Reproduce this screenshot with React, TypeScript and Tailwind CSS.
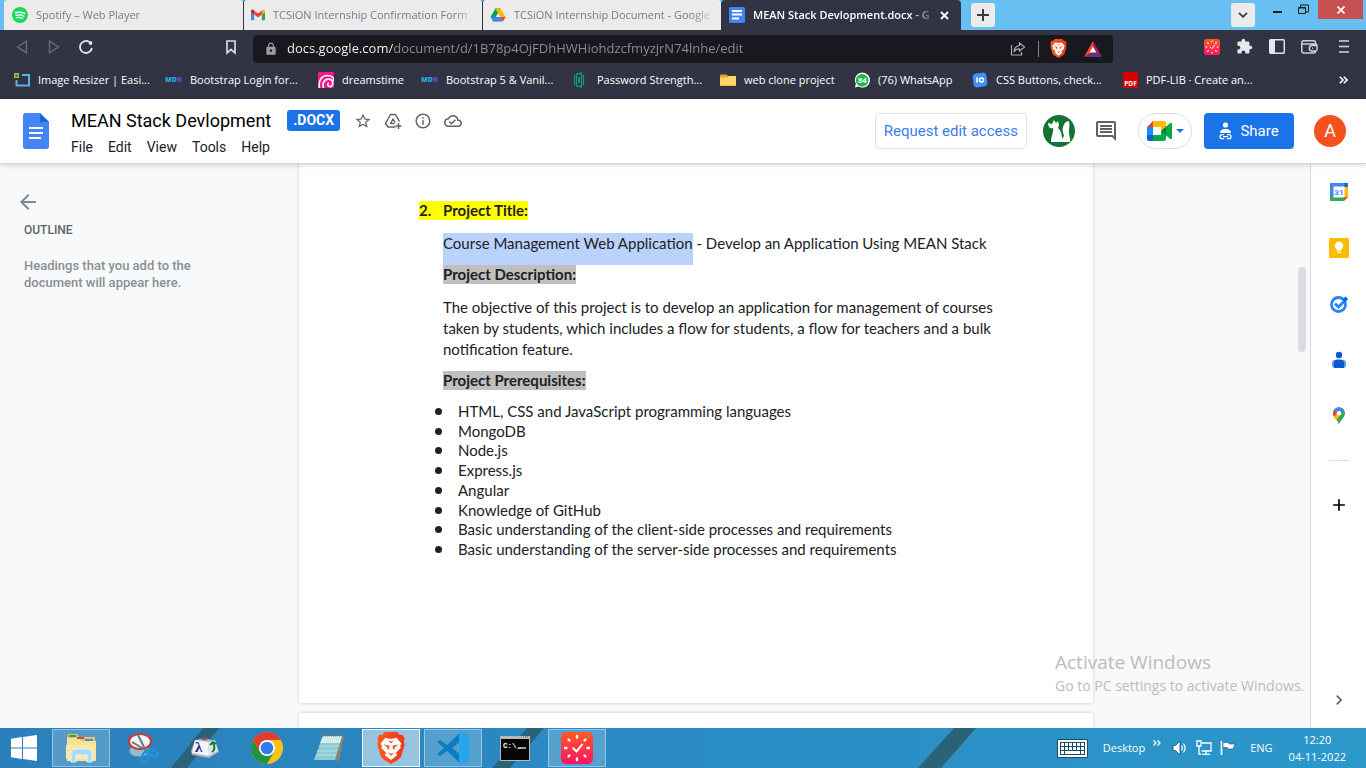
import type { ReactNode } from "react";
import {
  MdAdd,
  MdArrowBack,
  MdChevronRight,
  MdExtension,
  MdInfoOutline,
  MdLock,
  MdOutlineCloudDone,
  MdOutlineComment,
  MdStarBorder,
} from "react-icons/md";

const SpotifyIcon = () => (
  <svg width="16" height="16" viewBox="0 0 16 16" className="shrink-0">
    <circle cx="8" cy="8" r="8" fill="#1ed760" />
    <g fill="none" stroke="#fff" strokeLinecap="round">
      <path d="M3.5 5.8c3-.9 6.600-.6 9.200.8" strokeWidth="1.500" />
      <path d="M4 8.300c2.600-.7 5.500-.4 7.800.9" strokeWidth="1.300" />
      <path d="M4.300 10.700c2.200-.5 4.500-.3 6.400.8" strokeWidth="1.100" />
    </g>
  </svg>
);

const GmailIcon = () => (
  <svg width="14" height="16" viewBox="0 0 14 16" className="shrink-0">
    <path d="M0 4v8.200c0 .6.400 1 1 1h2.200V7.500z" fill="#4285f4" />
    <path d="M14 4v8.200c0 .6-.4 1-1 1h-2.200V7.500z" fill="#34a853" />
    <path d="M10.800 3.600v4L14 5.200V4c0-1.400-1.500-2-2.500-1.100z" fill="#fbbc04" />
    <path d="M0 4v1.200l3.200 2.400v-4l-.7-.7C1.500 2 0 2.600 0 4z" fill="#c5221f" />
    <path d="M3.200 3.600v4L7 10.400l3.800-2.800v-4L7 6.400z" fill="#ea4335" />
  </svg>
);

const DriveIcon = () => (
  <svg width="16" height="16" viewBox="0 0 16 16" className="shrink-0">
    <path d="M5.400 1.500h5.200L8 6z" fill="#188038" />
    <path d="M10.600 1.500L15.500 10h-5.200L5.400 1.500z" fill="#fbbc04" />
    <path d="M5.400 1.500L8 6 5.700 10H.5z" fill="#0f9d58" />
    <path d="M.5 10h10l-2.400 4.500H3.100z" fill="#4285f4" />
    <path d="M3.100 14.500L5.700 10h4.600l2.600 4.500z" fill="#4285f4" />
    <path d="M10.300 10h5.200l-2.600 4.500z" fill="#ea4335" />
  </svg>
);

const DocsTabIcon = () => (
  <svg width="16" height="16" viewBox="0 0 16 16" className="shrink-0">
    <rect width="16" height="16" rx="1.500" fill="#4285f4" />
    <path d="M3 4h10M3 7.500h10M3 11.500h7" stroke="#fff" strokeWidth="1.800" />
  </svg>
);

const ResizerIcon = () => (
  <svg width="16" height="16" viewBox="0 0 16 16">
    <path d="M8 3h7v10.500H2.500V8" fill="none" stroke="#5aaeea" strokeWidth="2" />
    <rect x="0" y="1" width="5" height="5" fill="#8bc34a" />
    <rect x="1.500" y="2.500" width="2" height="2" fill="#33691e" />
  </svg>
);

const MdbIcon = () => (
  <svg width="17" height="16" viewBox="0 0 17 16">
    <text x="0" y="10" fontFamily="Open Sans" fontWeight="800" fontSize="7" fill="#29a9e1">
      MD<tspan fill="#5b4fc4">B</tspan>
    </text>
  </svg>
);

const DreamIcon = () => (
  <svg width="16" height="16" viewBox="0 0 16 16">
    <rect width="16" height="16" rx="1" fill="#f2188c" />
    <path
      d="M1.500 16C0 8 4 3.500 9.500 3.500c4 0 6.500 2.500 6.500 5.500M5.500 16c-1.500-5 .8-8.800 5-8.800 3 0 4.300 2 4.300 4.300 0 2.300-1.800 3.500-3.600 3s-2-3-.3-3.500"
      fill="none"
      stroke="#fff"
      strokeWidth="1.700"
    />
  </svg>
);

const PasswordIcon = () => (
  <svg width="16" height="16" viewBox="0 0 16 16" fill="none" stroke="#0f9d6b">
    <path d="M1.500 3v10M3.500 2l5-1v14l-5-1zM10.500 3v10" strokeWidth="1.300" />
    <path d="M6 5v6" strokeWidth="1.800" />
  </svg>
);

const FolderIcon = () => (
  <svg width="16" height="16" viewBox="0 0 16 16">
    <path d="M1 2.500h5.500L8 4h7c.6 0 1 .4 1 1v8c0 .6-.4 1-1 1H1c-.6 0-1-.4-1-1V3.500c0-.6.4-1 1-1z" fill="#e2a52c" />
    <path d="M1 5.500h6L8.500 4H15c.6 0 1 .4 1 1v7.500c0 .6-.4 1-1 1H1c-.6 0-1-.4-1-1v-6c0-.6.4-1 1-1z" fill="#ffd766" />
  </svg>
);

const WhatsAppIcon = () => (
  <svg width="16" height="17" viewBox="0 0 17 17">
    <path d="M1 16l1-4A8 8 0 1 1 5 15z" fill="#fff" />
    <circle cx="8.700" cy="8.200" r="6.700" fill="#1fb84f" />
    <text x="8.700" y="11" textAnchor="middle" fontFamily="Open Sans" fontWeight="700" fontSize="8" fill="#fff">
      84
    </text>
  </svg>
);

const CssButtonsIcon = () => (
  <svg width="16" height="16" viewBox="0 0 16 16">
    <rect x="1" y="1" width="14" height="14" rx="4" fill="#3f8ff5" transform="rotate(-8 8 8)" />
    <path d="M5 5.500v5" stroke="#fff" strokeWidth="1.600" />
    <circle cx="9.500" cy="8" r="2" fill="none" stroke="#fff" strokeWidth="1.500" />
  </svg>
);

const PdfIcon = () => (
  <svg width="15" height="16" viewBox="0 0 15 16">
    <rect width="15" height="16" fill="#d50000" />
    <text x="7.500" y="13.500" textAnchor="middle" fontFamily="Open Sans" fontWeight="700" fontSize="6.500" fill="#fff">
      PDF
    </text>
  </svg>
);

const BraveIcon = ({ size }: { size: number }) => (
  <svg width={size} height={size} viewBox="0 0 24 24">
    <defs>
      <linearGradient id="braveFill" x1="0" y1="0" x2="1" y2="0">
        <stop offset="0" stopColor="#ff5a1f" />
        <stop offset="1" stopColor="#f5351a" />
      </linearGradient>
    </defs>
    <path d="M7.500 0h9l2.200 2.300 2-.2L22.300 5l-.7 2 .6 2.500-2.700 9.300-2.700 2.400L12 24l-4.800-2.800-2.700-2.400L1.800 9.500 2.400 7l-.7-2 1.600-2.900 2 .2z" fill="url(#braveFill)" />
    <path d="M7.800 4.300l4.200.9 4.200-.9 3.700 4.500-1.100 1.500.5 1.700-3.600 3.500.9 2L12 21l-4.600-3.500.9-2L4.700 12l.5-1.700-1.100-1.500z" fill="#fff" />
    <path d="M6.200 9.300l3.900.6.8 1.200-.7 2.300-1-.6.2-1.400zM17.800 9.300l-3.900.6-.8 1.200.7 2.300 1-.6-.2-1.400zM9.800 6.200l2.200 1 2.200-1L12 8.600zM9.700 15.300l2.300 1 2.300-1-2.300 2.600z" fill="#fb4a20" />
  </svg>
);

const WatchIcon = ({ size }: { size: number }) => (
  <svg width={size} height={size} viewBox="0 0 32 32">
    <defs>
      <linearGradient id="watchFill" x1="0" y1="0" x2="0" y2="1">
        <stop offset="0" stopColor="#ff5a26" />
        <stop offset="1" stopColor="#ff1463" />
      </linearGradient>
    </defs>
    <rect width="32" height="32" rx="5" fill="url(#watchFill)" />
    <g stroke="#fff" strokeWidth="2.400" strokeLinecap="round">
      <path d="M16 4v1.500M16 26.500V28M4 16h1.500M26.500 16H28M7.500 7.500l1 1M23.500 23.500l1 1M7.500 24.500l1-1M23.500 8.500l1-1" />
    </g>
    <path d="M11.500 15.500l4 4 6-7.500" fill="none" stroke="#fff" strokeWidth="2" />
  </svg>
);

const AddToDriveIcon = () => (
  <svg width="18" height="18" viewBox="0 0 18 18" fill="none" stroke="#5f6368" strokeWidth="1.500" strokeLinejoin="round">
    <path d="M11.500 15H4L1.500 11.500 6.500 2.500h5l4 7" />
    <path d="M10.500 11.500h-4l2.500-4.500 2 3.500" />
    <path d="M14.500 11v6M11.500 14h6" />
  </svg>
);

const bookmarks: { label: string; icon: ReactNode; width: string }[] = [
  { label: "Image Resizer | Easi...", icon: <ResizerIcon />, width: "w-[151px]" },
  { label: "Bootstrap Login for...", icon: <MdbIcon />, width: "w-[153px]" },
  { label: "dreamstime", icon: <DreamIcon />, width: "w-[103px]" },
  { label: "Bootstrap 5 & Vanil...", icon: <MdbIcon />, width: "w-[152px]" },
  { label: "Password Strength...", icon: <PasswordIcon />, width: "w-[147px]" },
  { label: "web clone project", icon: <FolderIcon />, width: "w-[134px]" },
  { label: "(76) WhatsApp", icon: <WhatsAppIcon />, width: "w-[118px]" },
  { label: "CSS Buttons, check...", icon: <CssButtonsIcon />, width: "w-[151px]" },
  { label: "PDF-LIB · Create an...", icon: <PdfIcon />, width: "w-[150px]" },
];

const backgroundTabs = [
  { label: "Spotify – Web Player", icon: <SpotifyIcon /> },
  { label: "TCSiON Internship Confirmation Form", icon: <GmailIcon /> },
  { label: "TCSiON Internship Document - Google", icon: <DriveIcon /> },
];

function TabStrip() {
  return (
    <div className="flex h-[30px] shrink-0 bg-[#68bff1] pl-1 text-[11px]">
      {backgroundTabs.map((tab) => (
        <button
          key={tab.label}
          className="flex h-[30px] w-[239px] items-center gap-2 rounded-t-[3px] border-l border-[#323443] bg-[#ebebeb] pr-1 pl-[7px] text-[#7b7c80] first:border-[#ebebeb]"
        >
          {tab.icon}
          <span className="min-w-0 flex-1 overflow-hidden text-left whitespace-nowrap [mask-image:linear-gradient(90deg,#000_88%,transparent)]">
            {tab.label}
          </span>
        </button>
      ))}
      <div className="flex w-[240px] items-center gap-2 rounded-t-[4px] bg-[#323443] pr-2 pl-2 text-white">
        <DocsTabIcon />
        <button className="min-w-0 flex-1 overflow-hidden text-left font-semibold whitespace-nowrap [mask-image:linear-gradient(90deg,#000_86%,transparent)]">
          MEAN Stack Devlopment.docx - G
        </button>
        <button aria-label="Close tab" className="-ml-1 py-1 pr-1">
          <svg width="9" height="9" viewBox="0 0 9 9" stroke="#fff" strokeWidth="1.800">
            <path d="M1 1l7 7M8 1L1 8" />
          </svg>
        </button>
      </div>
      <button aria-label="New tab" className="mt-[3px] ml-[10px] flex size-6 items-center justify-center rounded-[3px] bg-[#ebebeb]">
        <svg width="12" height="12" viewBox="0 0 12 12" stroke="#3c3c40" strokeWidth="2">
          <path d="M6 0v12M0 6h12" />
        </svg>
      </button>
      <div className="flex-1" />
      <button aria-label="Search tabs" className="mt-[3px] flex size-6 items-center justify-center rounded-[3px] bg-[#ebebeb]">
        <svg width="10" height="6" viewBox="0 0 10 6" fill="none" stroke="#3c3c40" strokeWidth="1.800">
          <path d="M1 .8l4 4 4-4" />
        </svg>
      </button>
      <button aria-label="Minimize" className="ml-[18px] h-6">
        <svg width="9" height="12" viewBox="0 0 9 12">
          <path d="M0 6h9" stroke="#1c1c1c" strokeWidth="2" />
        </svg>
      </button>
      <button aria-label="Restore" className="ml-4 h-[18px]">
        <svg width="11" height="11" viewBox="0 0 11 11" fill="none" stroke="#1c1c1c">
          <path d="M.5 3.500h7v6h-7zM.5 4h7M2.500 3V1h8v7H8" />
        </svg>
      </button>
      <button aria-label="Close window" className="mr-[3px] ml-[9px] flex h-[19px] w-[45px] items-center justify-center bg-[#c75050]">
        <svg width="8" height="8" viewBox="0 0 8 8" stroke="#fff" strokeWidth="1.700">
          <path d="M.5.500l7 7M7.500.500l-7 7" />
        </svg>
      </button>
    </div>
  );
}

function AddressBar() {
  return (
    <div className="flex h-[37px] shrink-0 items-center bg-[#323443] pr-[17px] pb-1 pl-4">
      <button aria-label="Back" className="mr-5">
        <svg width="12" height="14" viewBox="0 0 12 14" fill="none" stroke="#6d6f7c" strokeWidth="1.300">
          <path d="M10.500 1.200v11.600L1.500 7z" />
        </svg>
      </button>
      <button aria-label="Forward" className="mr-[18px]">
        <svg width="12" height="14" viewBox="0 0 12 14" fill="none" stroke="#6d6f7c" strokeWidth="1.300">
          <path d="M1.500 1.200v11.600l9-5.800z" />
        </svg>
      </button>
      <button aria-label="Reload">
        <svg width="16" height="16" viewBox="0 0 16 16" fill="none" stroke="#e8e8ec" strokeWidth="1.800">
          <path d="M11 2.800A6 6 0 1 0 13.900 9" />
          <circle cx="12.500" cy="4" r="1.900" fill="#e8e8ec" stroke="none" />
        </svg>
      </button>
      <button aria-label="Bookmark this page" className="mr-[14px] ml-[129px]">
        <svg width="16" height="16" viewBox="0 0 16 16" fill="none" stroke="#d8d8dc" strokeWidth="1.700">
          <path d="M4 2h8v12l-4-3.500L4 14z" />
        </svg>
      </button>
      <div className="mt-1 flex h-7 min-w-0 flex-1 items-center rounded bg-[#17191e] px-[11px]">
        <MdLock size={14} color="#9b9ca3" />
        <input
          aria-label="Address"
          readOnly
          value="docs.google.com/document/d/1B78p4OjFDhHWHiohdzcfmyzjrN74lnhe/edit"
          className="ml-[9px] min-w-0 flex-1 bg-[linear-gradient(90deg,#fff_106px,#8d8f96_106px)] bg-clip-text text-[13px] text-transparent outline-none"
        />
        <button aria-label="Share page" className="mr-3">
          <svg width="16" height="14" viewBox="0 0 16 14" fill="none" stroke="#a9aab0" strokeWidth="1.200">
            <path d="M1.500 3v10h10v-3M9.500 1l5 4-5 4V6.800C7 6.800 5.200 7.800 4 10c.2-3.700 2.200-6 5.500-6.500z" />
          </svg>
        </button>
        <span className="mr-[10px] h-4 w-px bg-[#85868c]" />
        <button aria-label="Brave shields" className="mr-4">
          <BraveIcon size={19} />
        </button>
        <button aria-label="Brave rewards">
          <svg width="18" height="16" viewBox="0 0 18 16">
            <path d="M9 0L0 16l9-5z" fill="#ff4724" />
            <path d="M9 0l9 16-9-5z" fill="#9e1f63" />
            <path d="M0 16h18l-9-5z" fill="#662d91" />
            <path d="M9 5.500l3.300 6H5.700z" fill="#fff" />
          </svg>
        </button>
      </div>
      <div className="ml-[91px] flex items-center gap-4 text-[#e8e8ec]">
        <button aria-label="Timer extension">
          <WatchIcon size={16} />
        </button>
        <button aria-label="Extensions">
          <MdExtension size={17} />
        </button>
        <button aria-label="Sidebar">
          <svg width="16" height="15" viewBox="0 0 16 15">
            <rect x=".7" y=".7" width="14.600" height="13.600" rx="1" fill="none" stroke="#e8e8ec" strokeWidth="1.400" />
            <path d="M1 1h5v13H1z" fill="#e8e8ec" />
          </svg>
        </button>
        <button aria-label="Wallet">
          <svg width="17" height="14" viewBox="0 0 17 14" fill="none" stroke="#d0d0d5" strokeWidth="1.500">
            <path d="M14.500 4V2.500c0-1-.7-1.700-1.700-1.700H2.500c-1 0-1.700.7-1.700 1.700v8.500c0 1.200.8 2 2 2h9.700c1.200 0 2-.8 2-2M1 4h13.500c1 0 1.500.5 1.500 1.500v3.800c0 1-.5 1.700-1.500 1.700H11a2.700 2.700 0 0 1 0-5.400h5M11 8.300h1" />
          </svg>
        </button>
        <button aria-label="Menu" className="ml-[5px]">
          <svg width="10" height="13" viewBox="0 0 10 13" stroke="#d8d8dc" strokeWidth="1.600">
            <path d="M0 1h10M0 6.500h10M0 12h10" />
          </svg>
        </button>
      </div>
    </div>
  );
}

function Bookmarks() {
  return (
    <nav aria-label="Bookmarks" className="flex h-8 shrink-0 items-center bg-[#323443] pr-[18px] pb-[6px] pl-[14px] text-[11px] text-white">
      {bookmarks.map((b) => (
        <a key={b.label} href="#" className={`flex shrink-0 items-center gap-2 whitespace-nowrap ${b.width}`}>
          {b.icon}
          {b.label}
        </a>
      ))}
      <button aria-label="More bookmarks" className="ml-auto">
        <svg width="9" height="8" viewBox="0 0 9 8" fill="none" stroke="#fff" strokeWidth="1.600">
          <path d="M.8.800L4 4 .8 7.200M4.800.800L8 4 4.800 7.200" />
        </svg>
      </button>
    </nav>
  );
}

function DocsHeader() {
  return (
    <header className="z-10 flex h-[65px] shrink-0 items-center border-b border-[#d5d8db] bg-white pr-5 pl-[23px] font-[Roboto,sans-serif] shadow-[0_1px_5px_rgba(0,0,0,0.18)]">
      <a href="#" aria-label="Docs home">
        <svg width="26" height="36" viewBox="0 0 26 36">
          <path d="M2.500 0H17l9 9v24.500c0 1.500-1 2.500-2.500 2.500h-21C1 36 0 35 0 33.500v-31C0 1 1 0 2.500 0z" fill="#4285f4" />
          <path d="M17 0l9 9h-9z" fill="#1967d2" />
          <path d="M6 15h14M6 20h14M6 25h12" stroke="#fff" strokeWidth="2" />
        </svg>
      </a>
      <div className="ml-[22px] flex flex-col pt-[3px]">
        <div className="flex h-7 items-center">
          <h1 className="text-lg text-black">MEAN Stack Devlopment</h1>
          <span className="ml-4 rounded-[3px] bg-[#1a73e8] px-[6px] text-sm leading-[21px] font-bold text-white">.DOCX</span>
          <div className="ml-[14px] flex items-center gap-3 text-[#5f6368]">
            <button aria-label="Star"><MdStarBorder size={18} /></button>
            <button aria-label="Add shortcut to Drive"><AddToDriveIcon /></button>
            <button aria-label="Document status"><MdInfoOutline size={18} /></button>
            <button aria-label="Saved to Drive"><MdOutlineCloudDone size={18} /></button>
          </div>
        </div>
        <nav className="flex gap-[15px] text-sm leading-6 text-[#202124]">
          {["File", "Edit", "View", "Tools", "Help"].map((m) => (
            <button key={m}>{m}</button>
          ))}
        </nav>
      </div>
      <div className="ml-auto flex items-center">
        <button className="h-9 rounded border border-[#e4e5e8] px-2 text-[15px] text-[#3b7ded]">Request edit access</button>
        <button aria-label="Viewer" className="ml-4">
          <svg width="32" height="32" viewBox="0 0 32 32">
            <circle cx="16" cy="16" r="16" fill="#137333" />
            <path d="M5 8l4 1 2-4 2 3 2-2 1 4-1 3c3 3 4 6 4 11l2-3c-1-4-2-6-1-9 1-4 3-6 6-6 1 4 0 6 0 11 0 5 2 7 1 10H8c0-6 3-10 2-14-3 1-5-1-5-5z" fill="#fff" />
          </svg>
        </button>
        <button aria-label="Comments" className="ml-[19px] text-[#5f6368]">
          <MdOutlineComment size={24} />
        </button>
        <button aria-label="Join a call" className="ml-5 flex h-9 w-[54px] items-center justify-center gap-1 rounded-full border border-[#dadce0]">
          <svg width="25" height="20" viewBox="0 0 25 20">
            <path d="M0 6l6-6v6z" fill="#ea4335" />
            <path d="M0 6h6v8H0z" fill="#2684fc" />
            <path d="M0 14h6v6H2c-1.200 0-2-.8-2-2z" fill="#0066da" />
            <path d="M6 0h11c1.200 0 2 .8 2 2v4.500L14 10V6H6z" fill="#ffba00" />
            <path d="M6 14h8v-4l5 4v4c0 1.200-.8 2-2 2H6z" fill="#00ac47" />
            <path d="M14 10l5-4.500v9z" fill="#00832d" />
            <path d="M19 5.500l4-3.300c.8-.7 2-.2 2 .8v14c0 1-1.200 1.500-2 .8l-4-3.300z" fill="#00ac47" />
          </svg>
          <svg width="8" height="4" viewBox="0 0 8 4"><path d="M0 0h8L4 4z" fill="#1a73e8" /></svg>
        </button>
        <button className="ml-3 flex h-9 w-[90px] items-center justify-center gap-2 rounded bg-[#1a73e8] text-[15px] text-white">
          <svg width="13" height="18" viewBox="0 0 13 18" fill="none" stroke="#fff">
            <circle cx="6.500" cy="3" r="2.600" fill="#fff" stroke="none" />
            <path d="M1 11c0-3 2.500-4 5.500-4s5.500 1 5.500 4z" fill="#fff" stroke="none" />
            <path d="M5 12.700H3a2 2 0 0 0 0 4h2M8 12.700h2a2 2 0 0 1 0 4H8M4 14.700h5" strokeWidth="1.200" />
          </svg>
          Share
        </button>
        <button aria-label="Account" className="ml-5 size-8 rounded-full bg-[#f4511e] text-lg text-white">A</button>
      </div>
    </header>
  );
}

const prerequisites = [
  "HTML, CSS and JavaScript programming languages",
  "MongoDB",
  "Node.js",
  "Express.js",
  "Angular",
  "Knowledge of GitHub",
  "Basic understanding of the client-side processes and requirements",
  "Basic understanding of the server-side processes and requirements",
];

function DocumentPage() {
  return (
    <article className="grow bg-white pt-[37px] pr-16 pl-[144px] font-[Lato,sans-serif] text-[15px] text-[#202124] shadow-[0_0_3px_rgba(60,64,67,0.25)]">
      <h2 className="-ml-6 flex leading-[19px] font-bold">
        <span className="w-6 bg-[#ffff00]">2.</span>
        <span className="bg-[#ffff00]">Project Title:</span>
      </h2>
      <p className="mt-[13px] flex h-8 leading-5 whitespace-pre">
        <span className="bg-[#bad3fd]">Course Management Web Application</span>
        <span> - Develop an Application Using MEAN Stack</span>
      </p>
      <h3 className="w-fit bg-[#bfbfbf] leading-[19px] font-bold">Project Description:</h3>
      <p className="mt-[13px] leading-[21px]">
        The objective of this project is to develop an application for management of courses
        <br />
        taken by students, which includes a flow for students, a flow for teachers and a bulk
        <br />
        notification feature.
      </p>
      <h3 className="mt-[11px] w-fit bg-[#bfbfbf] leading-[19px] font-bold">Project Prerequisites:</h3>
      <ul className="mt-3 -ml-2 flex h-[157px] flex-col justify-between leading-[19px]">
        {prerequisites.map((p) => (
          <li key={p} className="flex items-center gap-4">
            <span className="size-[7px] rounded-full bg-[#202124]" />
            {p}
          </li>
        ))}
      </ul>
    </article>
  );
}

function SidePanel() {
  return (
    <aside className="flex w-14 shrink-0 flex-col items-center border-l border-[#d8dade] bg-white pt-[18px] pb-[18px]">
      <div className="flex flex-col gap-9">
        <button aria-label="Calendar">
          <svg width="20" height="20" viewBox="0 0 20 20">
            <path d="M15 1h4v5h-4z" fill="#1967d2" />
            <path d="M15 5h4v10h-4z" fill="#fbbc04" />
            <path d="M1 15h14v4H2c-.6 0-1-.4-1-1z" fill="#34a853" />
            <path d="M15 15h4l-4 4z" fill="#ea4335" />
            <path d="M4.500 4.500h11v11h-11z" fill="#fff" />
            <path d="M1 2c0-.6.400-1 1-1h13v3.500H4.500V15H1z" fill="#4285f4" />
            <text x="9.900" y="13" textAnchor="middle" fontFamily="Roboto" fontWeight="700" fontSize="8" fill="#4285f4">31</text>
          </svg>
        </button>
        <button aria-label="Keep">
          <svg width="20" height="20" viewBox="0 0 20 20">
            <rect width="20" height="20" rx="1.500" fill="#fbbc04" />
            <path d="M7.800 12.700h4.400v-1.400a4.200 4.200 0 1 0-4.400 0zM7.800 13.700h4.400V15H7.800z" fill="#fff" />
          </svg>
        </button>
        <button aria-label="Tasks">
          <svg width="20" height="20" viewBox="0 0 20 20">
            <circle cx="9.500" cy="10.500" r="7" fill="none" stroke="#2684fc" strokeWidth="2.800" />
            <path d="M6 9.500l3.500 3.500L16 6.500" fill="none" stroke="#2684fc" strokeWidth="3" />
            <path d="M13.500 5.500l3-3L19 5l-3 3.500z" fill="#0066da" />
          </svg>
        </button>
        <button aria-label="Contacts">
          <svg width="20" height="20" viewBox="0 0 20 20">
            <rect x="3" y="10" width="14" height="8" rx="3" fill="#5e97f6" />
            <circle cx="10" cy="5" r="3.200" fill="#0b57d0" />
            <path d="M5 13c0-2.200 1.300-3.500 3.500-3.500h3c2.200 0 3.500 1.300 3.500 3.500v5H5z" fill="#0b57d0" />
          </svg>
        </button>
        <button aria-label="Maps">
          <svg width="20" height="20" viewBox="0 0 20 20">
            <defs>
              <clipPath id="pin"><path d="M10 18.500C9 14.500 4 11.500 4 7.300a6 6 0 0 1 12 0c0 4.200-5 7.200-6 11.200z" /></clipPath>
            </defs>
            <g clipPath="url(#pin)">
              <path d="M0 0h20v20H0z" fill="#34a853" />
              <path d="M3 4h7v4l-5 3-2-1z" fill="#ea4335" />
              <path d="M4 4l6 3.300L15.500 4 14 0H6z" fill="#4285f4" />
              <path d="M4 11l4.500-3 2 2L7 15z" fill="#fbbc04" />
            </g>
            <circle cx="10" cy="7.300" r="2.300" fill="#fff" />
          </svg>
        </button>
      </div>
      <hr className="mt-[34px] w-5 border-[#dadce0]" />
      <button aria-label="Get add-ons" className="mt-[34px] text-black">
        <MdAdd size={20} />
      </button>
      <button aria-label="Hide side panel" className="mt-auto text-[#5f6368]">
        <MdChevronRight size={20} />
      </button>
    </aside>
  );
}

function TaskSlot({ label, state, children }: { label: string; state?: "open" | "active"; children: ReactNode }) {
  const look =
    state === "active"
      ? "border-white/90 bg-white/50"
      : state === "open"
        ? "border-white/40 bg-white/20"
        : "border-transparent";
  return (
    <button aria-label={label} className={`flex h-[38px] w-[58px] items-center justify-center border ${look}`}>
      {children}
    </button>
  );
}

function Taskbar() {
  return (
    <footer className="relative flex h-10 shrink-0 items-center bg-[linear-gradient(90deg,#2b80bb,#2a8bc4_50%,#2b98ca)] text-[11px] text-white">
      <svg aria-hidden="true" className="absolute inset-0 h-10 w-full" fill="#2b6277">
        <path d="M203 0h16l-32 40h-16zM527 0h17l-34 40h-18zM954 0h22l-35 40h-23z" />
      </svg>
      <div className="relative flex items-center gap-1">
        <button aria-label="Start" className="flex h-10 w-12 items-center justify-center">
          <svg width="26" height="26" viewBox="0 0 26 26" fill="#fff">
            <path d="M0 3.700L11 2v10.500H0zM12 1.900L26 0v12.500H12zM0 13.500h11V24L0 22.300zM12 13.500h14V26l-14-1.900z" />
          </svg>
        </button>
        <TaskSlot label="File Explorer" state="open">
          <svg width="34" height="32" viewBox="0 0 34 32">
            <path d="M3 5l1-3h9l2 3h16v24H3z" fill="#e3c36c" />
            <path d="M3 6h12l2 3h15v20H3z" fill="#f7e29a" />
            <path d="M5 3h7v2H5z" fill="#26a641" />
            <path d="M13 5h7v2h-7z" fill="#d94a38" />
            <path d="M21 7h8v2h-8z" fill="#3c91d9" />
            <path d="M2 13h30v14H2z" fill="#f9e7a8" />
            <path d="M7 30V20l3-3h15l3 3v10h-5v-7H12v7z" fill="#a9dcf2" stroke="#dff4fc" />
          </svg>
        </TaskSlot>
        <TaskSlot label="Snipping Tool">
          <svg width="32" height="32" viewBox="0 0 32 32">
            <ellipse cx="12" cy="19" rx="10" ry="6" fill="#98b9d5" stroke="#58809f" />
            <ellipse cx="13" cy="9.500" rx="11" ry="7.500" fill="#f1f3f6" stroke="#c93a3a" strokeWidth="2" />
            <path d="M11 3l8 16M5 10l17 10" stroke="#6b7480" strokeWidth="2" />
            <ellipse cx="18" cy="25" rx="3" ry="5" fill="none" stroke="#2494dd" strokeWidth="2.500" transform="rotate(15 18 25)" />
            <ellipse cx="26" cy="21" rx="3" ry="5" fill="none" stroke="#2494dd" strokeWidth="2.500" transform="rotate(-55 26 21)" />
          </svg>
        </TaskSlot>
        <TaskSlot label="Formula editor">
          <svg width="30" height="26" viewBox="0 0 30 26">
            <path d="M5 5l10-2 10 3 4 11-10 6-17-3-1-4z" fill="#a9b1c2" />
            <path d="M5 5l13 2 1 14-17-3z" fill="#f3f4f8" />
            <path d="M18 7l7-2 3 11-9 5z" fill="#dfe3ea" />
            <path d="M12 3h5v2h-5z" fill="#c93a3a" />
            <text x="5" y="17" fontFamily="Liberation Serif" fontWeight="700" fontSize="15" fill="#27218a">λ</text>
            <path d="M22 17c3-2 3-5 1-9m-3 2l3-3 3 2" fill="none" stroke="#1b7c35" strokeWidth="2" />
          </svg>
        </TaskSlot>
        <TaskSlot label="Chrome">
          <svg width="32" height="32" viewBox="0 0 32 32">
            <circle cx="16" cy="16" r="16" fill="#fbc116" />
            <path d="M2.140 8A16 16 0 0 0 16 32l6.930-12H16L9.070 20z" fill="#229342" />
            <path d="M2.140 8A16 16 0 0 1 29.860 8H16L9.070 20z" fill="#e33b2e" />
            <circle cx="16" cy="16" r="8" fill="#fff" />
            <circle cx="16" cy="16" r="6.300" fill="#2d7bf0" />
          </svg>
        </TaskSlot>
        <TaskSlot label="Notepad">
          <svg width="32" height="30" viewBox="0 0 32 30">
            <path d="M11 3h20l-5 25-5-1z" fill="#8b8468" />
            <path d="M10 3h19l-7 24H1z" fill="#8dcbd5" />
            <path d="M10 3h19l-2 7H7z" fill="#d1edf0" />
            <path d="M6 13h20M4 18h20M3 22h20" stroke="#b9e2e7" />
            <path d="M10 2h20" stroke="#777" strokeWidth="3" strokeDasharray="1 1" />
          </svg>
        </TaskSlot>
        <TaskSlot label="Brave" state="active">
          <BraveIcon size={32} />
        </TaskSlot>
        <TaskSlot label="Visual Studio Code" state="open">
          <svg width="32" height="32" viewBox="0 0 32 32">
            <path d="M24 0L10 13 3 8 0 10l7 6-7 6 3 2 7-5 14 13V23l-9-7 9-7z" fill="#0a7cc4" />
            <path d="M24 0l8 3v26l-8 3-2-2V2z" fill="#24a5ec" />
          </svg>
        </TaskSlot>
        <TaskSlot label="Command Prompt">
          <svg width="30" height="25" viewBox="0 0 30 25">
            <path d="M0 0h30v25H0z" fill="#b7babd" />
            <path d="M1 3h28v21H1z" fill="#050505" />
            <path d="M23 1h1M25 1h1M27 1h1" stroke="#3366aa" />
            <text x="3" y="12" fontFamily="Liberation Mono" fontWeight="700" fontSize="7.500" fill="#fff">C:\_</text>
            <path d="M18 12h8" stroke="#fff" strokeWidth="1.200" />
          </svg>
        </TaskSlot>
        <TaskSlot label="Timer" state="open">
          <WatchIcon size={32} />
        </TaskSlot>
      </div>
      <div className="relative ml-auto flex items-center pr-5">
        <button aria-label="Touch keyboard">
          <svg width="31" height="19" viewBox="0 0 31 19">
            <path d="M.5.500h30v18H.5z" fill="#fff" stroke="#174b66" />
            <path d="M3 3h25v13H3z" fill="#174b66" />
            <path d="M4 5.500h23M4 9.500h23" stroke="#fff" strokeWidth="3" strokeDasharray="3 1" />
            <path d="M4 13.500h3M8 13.500h15M24 13.500h3" stroke="#fff" strokeWidth="3" />
          </svg>
        </button>
        <button className="ml-[15px]">Desktop</button>
        <button aria-label="More toolbars" className="ml-2 h-6 self-start">
          <svg width="8" height="6" viewBox="0 0 8 6" fill="none" stroke="#fff" strokeWidth="1.300">
            <path d="M.5.500L3 3 .5 5.500M4.500.500L7 3 4.500 5.500" />
          </svg>
        </button>
        <button aria-label="Volume" className="ml-[11px]">
          <svg width="15" height="16" viewBox="0 0 15 16">
            <path d="M1 5.500h2.500L8 1v14l-4.500-4.500H1z" fill="#fff" stroke="#174b66" strokeWidth=".8" />
            <path d="M9.500 5.500c1 1.500 1 3.500 0 5M11.500 3.500c2 3 2 6 0 9" fill="none" stroke="#fff" strokeWidth="1.200" />
          </svg>
        </button>
        <button aria-label="Network" className="ml-[9px]">
          <svg width="16" height="16" viewBox="0 0 16 16" fill="none" stroke="#fff" strokeWidth="1.300">
            <path d="M6 3h9v8H5.500M10 11v3M6 14.300h8M3 6v8h2M1 1h4v5H1z" />
          </svg>
        </button>
        <button aria-label="Action center" className="ml-2">
          <svg width="16" height="16" viewBox="0 0 16 16">
            <path d="M1.500 1v14" stroke="#fff" strokeWidth="1.600" />
            <path d="M3 2.500h5l1.500 1.500H15l-2 5H8.500L7 7.500H3z" fill="#fff" stroke="#174b66" strokeWidth=".6" />
          </svg>
        </button>
        <button className="ml-[14px]">ENG</button>
        <div className="ml-4 text-center leading-[17px]">
          <div>12:20</div>
          <div>04-11-2022</div>
        </div>
      </div>
    </footer>
  );
}

export default function App() {
  return (
    <div className="flex h-screen flex-col overflow-hidden font-['Open_Sans',sans-serif]">
      <TabStrip />
      <AddressBar />
      <Bookmarks />
      <DocsHeader />
      <main className="relative flex min-h-0 flex-1 bg-[#f8f9fb]">
        <aside className="w-[299px] shrink-0 px-5 pt-[26px] font-[Roboto,sans-serif]">
          <button aria-label="Close outline" className="-ml-1 block text-[#80868b]">
            <MdArrowBack size={24} />
          </button>
          <h2 className="mt-2 ml-1 text-xs leading-4 font-medium text-[#5f6368]">OUTLINE</h2>
          <p className="mt-[19px] ml-1 w-[190px] text-[13px] leading-[17px] font-medium text-[#8a8f94]">
            Headings that you add to the document will appear here.
          </p>
        </aside>
        <section className="flex w-[794px] shrink-0 flex-col gap-[10px]">
          <DocumentPage />
          <div className="h-[15px] shrink-0 bg-white shadow-[0_0_3px_rgba(60,64,67,0.25)]" />
        </section>
        <div className="flex flex-1 justify-end pt-[103px] pr-1">
          <div className="h-[85px] w-2 rounded-full bg-[#dadce0]" />
        </div>
        <SidePanel />
        <div className="pointer-events-none absolute right-14 bottom-8 w-[255px] whitespace-nowrap text-[#bbbcbd]">
          <div className="text-[19px] leading-7">Activate Windows</div>
          <div className="text-sm leading-5">Go to PC settings to activate Windows.</div>
        </div>
      </main>
      <Taskbar />
    </div>
  );
}
